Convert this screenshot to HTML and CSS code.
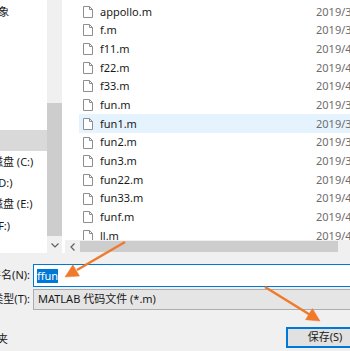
FILE: index.html
```html
<!DOCTYPE html>
<html lang="zh-CN">
<head>
<meta charset="utf-8">
<title>另存为</title>
<link rel="stylesheet" href="styles.css">
</head>
<body>
<div class="dialog">
  <div class="top">
    <div class="nav">
      <div class="nav-list">
        <div class="nav-item"><span class="nav-label">3D 对象</span></div>
        <div class="nav-item"><span class="nav-label">视频</span></div>
        <div class="nav-item"><span class="nav-label">图片</span></div>
        <div class="nav-item"><span class="nav-label">文档</span></div>
        <div class="nav-item"><span class="nav-label">下载</span></div>
        <div class="nav-item"><span class="nav-label">音乐</span></div>
        <div class="nav-item selected"><span class="nav-label">桌面</span></div>
        <div class="nav-item"><span class="nav-label">本地磁盘 (C:)</span></div>
        <div class="nav-item"><span class="nav-label">软件 (D:)</span></div>
        <div class="nav-item"><span class="nav-label">本地磁盘 (E:)</span></div>
        <div class="nav-item"><span class="nav-label">文档 (F:)</span></div>
      </div>
      <div class="vscroll">
        <div class="vtrack"><div class="vthumb"></div></div>
        <div class="sbtn vbtn">
          <svg width="8" height="5" viewBox="0 0 8 5"><path d="M0.5 0.5 L4 4 L7.5 0.5" fill="none" stroke="#606060" stroke-width="1.2"/></svg>
        </div>
      </div>
    </div>
    <div class="splitter"></div>
    <div class="files">
      <div class="file-list">
        <div class="file-row"><svg class="file-icon" viewBox="0 0 10 12"><path d="M0.5 0.5H6.5L9.5 3.5V11.5H0.5Z M6.5 0.5V3.5H9.5" fill="#fff" stroke="#8e8e8e"/></svg><span class="file-name">appollo.m</span><span class="file-date">2019/3/28 10:12</span></div>
        <div class="file-row"><svg class="file-icon" viewBox="0 0 10 12"><path d="M0.5 0.5H6.5L9.5 3.5V11.5H0.5Z M6.5 0.5V3.5H9.5" fill="#fff" stroke="#8e8e8e"/></svg><span class="file-name">f.m</span><span class="file-date">2019/3/30 16:05</span></div>
        <div class="file-row"><svg class="file-icon" viewBox="0 0 10 12"><path d="M0.5 0.5H6.5L9.5 3.5V11.5H0.5Z M6.5 0.5V3.5H9.5" fill="#fff" stroke="#8e8e8e"/></svg><span class="file-name">f11.m</span><span class="file-date">2019/4/2 9:41</span></div>
        <div class="file-row"><svg class="file-icon" viewBox="0 0 10 12"><path d="M0.5 0.5H6.5L9.5 3.5V11.5H0.5Z M6.5 0.5V3.5H9.5" fill="#fff" stroke="#8e8e8e"/></svg><span class="file-name">f22.m</span><span class="file-date">2019/4/2 9:52</span></div>
        <div class="file-row"><svg class="file-icon" viewBox="0 0 10 12"><path d="M0.5 0.5H6.5L9.5 3.5V11.5H0.5Z M6.5 0.5V3.5H9.5" fill="#fff" stroke="#8e8e8e"/></svg><span class="file-name">f33.m</span><span class="file-date">2019/4/2 10:03</span></div>
        <div class="file-row"><svg class="file-icon" viewBox="0 0 10 12"><path d="M0.5 0.5H6.5L9.5 3.5V11.5H0.5Z M6.5 0.5V3.5H9.5" fill="#fff" stroke="#8e8e8e"/></svg><span class="file-name">fun.m</span><span class="file-date">2019/3/29 15:20</span></div>
        <div class="file-row hover"><svg class="file-icon" viewBox="0 0 10 12"><path d="M0.5 0.5H6.5L9.5 3.5V11.5H0.5Z M6.5 0.5V3.5H9.5" fill="#fff" stroke="#8e8e8e"/></svg><span class="file-name">fun1.m</span><span class="file-date">2019/3/29 15:34</span></div>
        <div class="file-row"><svg class="file-icon" viewBox="0 0 10 12"><path d="M0.5 0.5H6.5L9.5 3.5V11.5H0.5Z M6.5 0.5V3.5H9.5" fill="#fff" stroke="#8e8e8e"/></svg><span class="file-name">fun2.m</span><span class="file-date">2019/3/29 15:48</span></div>
        <div class="file-row"><svg class="file-icon" viewBox="0 0 10 12"><path d="M0.5 0.5H6.5L9.5 3.5V11.5H0.5Z M6.5 0.5V3.5H9.5" fill="#fff" stroke="#8e8e8e"/></svg><span class="file-name">fun3.m</span><span class="file-date">2019/3/29 16:02</span></div>
        <div class="file-row"><svg class="file-icon" viewBox="0 0 10 12"><path d="M0.5 0.5H6.5L9.5 3.5V11.5H0.5Z M6.5 0.5V3.5H9.5" fill="#fff" stroke="#8e8e8e"/></svg><span class="file-name">fun22.m</span><span class="file-date">2019/4/2 10:15</span></div>
        <div class="file-row"><svg class="file-icon" viewBox="0 0 10 12"><path d="M0.5 0.5H6.5L9.5 3.5V11.5H0.5Z M6.5 0.5V3.5H9.5" fill="#fff" stroke="#8e8e8e"/></svg><span class="file-name">fun33.m</span><span class="file-date">2019/4/2 10:27</span></div>
        <div class="file-row"><svg class="file-icon" viewBox="0 0 10 12"><path d="M0.5 0.5H6.5L9.5 3.5V11.5H0.5Z M6.5 0.5V3.5H9.5" fill="#fff" stroke="#8e8e8e"/></svg><span class="file-name">funf.m</span><span class="file-date">2019/4/3 8:56</span></div>
        <div class="file-row"><svg class="file-icon" viewBox="0 0 10 12"><path d="M0.5 0.5H6.5L9.5 3.5V11.5H0.5Z M6.5 0.5V3.5H9.5" fill="#fff" stroke="#8e8e8e"/></svg><span class="file-name">ll.m</span><span class="file-date">2019/4/3 9:10</span></div>
      </div>
      <div class="hscroll">
        <div class="sbtn hbtn">
          <svg width="5" height="8" viewBox="0 0 5 8"><path d="M4.5 0.5 L1 4 L4.5 7.5" fill="none" stroke="#606060" stroke-width="1.2"/></svg>
        </div>
        <div class="hthumb"></div>
      </div>
    </div>
  </div>
  <div class="bottom">
    <div class="field">
      <div class="field-label"><span>文件名(N):</span></div>
      <div class="name-input"><span class="sel">ffun</span></div>
    </div>
    <div class="field type-field">
      <div class="field-label"><span>保存类型(T):</span></div>
      <div class="type-select">MATLAB 代码文件 (*.m)</div>
    </div>
    <div class="footer">
      <div class="hide-toggle"><span>隐藏文件夹</span></div>
      <button class="save-btn">保存(S)</button>
    </div>
  </div>
</div>
<svg class="annot" width="350" height="351" viewBox="0 0 350 351">
  <g fill="#f07a2a" stroke="#f07a2a">
    <line x1="125" y1="242" x2="77" y2="270" stroke-width="2.5"/>
    <polygon points="65,277 79.5,276.1 72.9,264.8" stroke-width="0.5"/>
    <line x1="265" y1="287" x2="309.5" y2="314.5" stroke-width="2.5"/>
    <polygon points="320,321 305.5,319.7 312.4,308.6" stroke-width="0.5"/>
  </g>
</svg>
</body>
</html>
```

FILE: styles.css
```css
html, body {
  margin: 0;
  padding: 0;
}

body {
  width: 350px;
  height: 351px;
  overflow: hidden;
  position: relative;
  background: #fff;
  color: #1a1a1a;
  font-family: "Noto Sans", "Noto Sans CJK SC", sans-serif;
  font-size: 11px;
  line-height: 1.3;
}

.dialog {
  display: flex;
  flex-direction: column;
  height: 351px;
}

.top {
  display: flex;
  height: 253px;
  flex: none;
  background: #fff;
}

/* navigation pane */
.nav {
  display: flex;
  width: 62px;
  flex: none;
}

.nav-list {
  width: 47px;
  overflow: hidden;
  padding-top: 1.3px;
  background: #fff;
}

.nav-item {
  height: 21.4px;
  display: flex;
  align-items: center;
  white-space: nowrap;
  color: #1a1a1a;
}

.nav-item.selected {
  background: #d9d9d9;
}

.nav-label {
  flex: none;
  margin-left: -30px;
}

.vscroll {
  width: 15px;
  display: flex;
  flex-direction: column;
  background: #f0f0f0;
}

.vtrack {
  flex: 1;
  display: flex;
  flex-direction: column;
  padding-top: 103px;
  padding-bottom: 2px;
}

.vthumb {
  flex: 1;
  background: #cdcdcd;
}

.sbtn {
  display: flex;
  align-items: center;
  justify-content: center;
  flex: none;
}

.vbtn {
  height: 15px;
}

.splitter {
  width: 3px;
  flex: none;
}

/* file list */
.files {
  flex: 1;
  min-width: 0;
  display: flex;
  flex-direction: column;
}

.file-list {
  height: 240px;
  overflow: hidden;
  padding-left: 14px;
  padding-top: 2.35px;
  box-sizing: border-box;
}

.file-row {
  height: 18.7px;
  display: flex;
  align-items: center;
  padding-left: 4px;
  white-space: nowrap;
}

.file-row.hover {
  background: #e5f3ff;
}

.file-icon {
  width: 10px;
  height: 12px;
  flex: none;
  margin-right: 7px;
}

.file-name {
  width: 216px;
  flex: none;
  color: #1a1a1a;
}

.file-date {
  flex: none;
  color: #6d6d6d;
}

.hscroll {
  height: 13px;
  flex: none;
  display: flex;
  background: #f0f0f0;
}

.hbtn {
  width: 15px;
}

.hthumb {
  width: 258px;
  margin: 1px 0;
  background: #cdcdcd;
}

/* bottom area */
.bottom {
  flex: 1;
  background: #f0f0f0;
  padding-top: 11px;
}

.field {
  display: flex;
  align-items: center;
}

.field-label {
  width: 30px;
  margin-right: 3px;
  flex: none;
  display: flex;
  justify-content: flex-end;
  overflow: hidden;
  white-space: nowrap;
}

.field-label span {
  flex: none;
}

.name-input {
  flex: 1;
  height: 23px;
  box-sizing: border-box;
  border: 1px solid #0078d7;
  background: #fff;
  display: flex;
  align-items: center;
  padding-left: 3px;
  margin-right: -5px;
}

.sel {
  background: #0078d7;
  color: #fff;
  line-height: 14px;
}

.type-field {
  margin-top: 2px;
}

.type-select {
  flex: 1;
  height: 21px;
  box-sizing: border-box;
  border: 1px solid #adadad;
  background: #e5e5e5;
  display: flex;
  align-items: center;
  padding-left: 4px;
  margin-right: -5px;
  white-space: nowrap;
}

.footer {
  margin-top: 17px;
  height: 21px;
  display: flex;
  align-items: center;
  justify-content: space-between;
}

.hide-toggle {
  width: 8px;
  display: flex;
  justify-content: flex-end;
  overflow: hidden;
  white-space: nowrap;
  margin-top: 3px;
}

.hide-toggle span {
  flex: none;
}

.save-btn {
  width: 78px;
  height: 21px;
  flex: none;
  box-sizing: border-box;
  margin: 0 -14px 0 0;
  padding: 0;
  border: 1px solid #0078d7;
  box-shadow: inset 0 0 0 1px #0078d7;
  background: #e1e1e1;
  color: #1a1a1a;
  font: inherit;
  display: flex;
  align-items: center;
  justify-content: center;
}

.annot {
  position: absolute;
  left: 0;
  top: 0;
  pointer-events: none;
}
```
